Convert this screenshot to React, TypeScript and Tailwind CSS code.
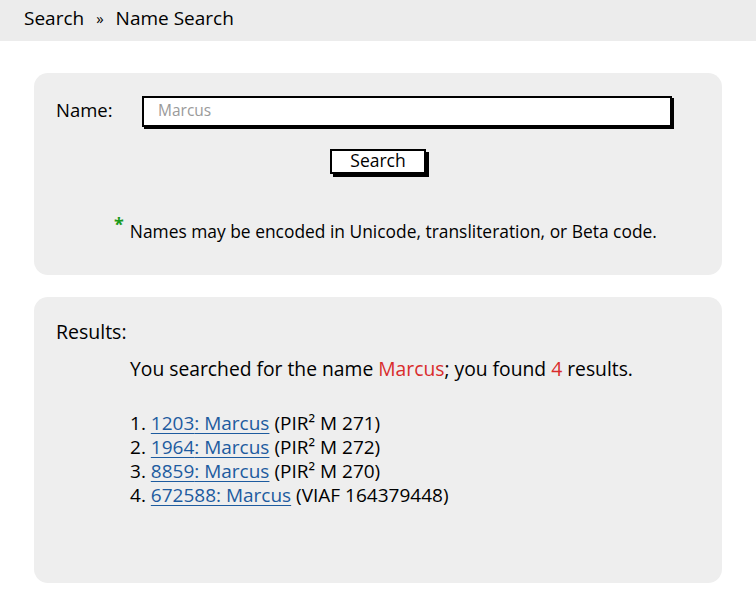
export default function App() {
  const results = [
    { id: "1203", ref: "PIR² M 271" },
    { id: "1964", ref: "PIR² M 272" },
    { id: "8859", ref: "PIR² M 270" },
    { id: "672588", ref: "VIAF 164379448" },
  ];

  return (
    <div className="w-[756px] h-[612px] bg-white text-black font-['Open_Sans',sans-serif]">
      {/* breadcrumb */}
      <div className="h-[41px] bg-[#ececec] flex items-center pl-[24px] text-[19px] pb-[4px]">
        <span>Search</span>
        <span className="mx-[12px] text-[15px]">»</span>
        <span>Name Search</span>
      </div>

      <div className="pl-[34px] pr-[34px] pt-[32px] flex flex-col gap-[22px]">
        {/* search panel */}
        <div className="h-[202px] bg-[#eeeeee] rounded-[14px] pt-[23px] flex flex-col">
          <div className="flex items-center">
            <label className="w-[108px] pl-[22px] text-[18.5px] pb-[4px]">Name:</label>
            <div className="w-[530px] h-[31px] bg-white border-2 border-black shadow-[2px_2px_0_#000] flex items-center pl-[14px] pb-[2px] text-[15.5px] text-[#9a9a9a]">
              Marcus
            </div>
          </div>
          <div className="flex justify-center mt-[21px]">
            <button className="w-[96px] h-[25px] bg-white border-2 border-black shadow-[3px_3px_0_#000] text-[17.5px] leading-none pb-[2px]">
              Search
            </button>
          </div>
          <div className="mt-[44px] pl-[80px] text-[17.4px] flex items-start">
            <span className="text-[#1a9a1a] font-bold text-[18px] leading-none mr-[6px] -mt-[3px]">*</span>
            <span>Names may be encoded in Unicode, transliteration, or Beta code.</span>
          </div>
        </div>

        {/* results panel */}
        <div className="h-[286px] bg-[#eeeeee] rounded-[14px] pt-[20px] pl-[22px]">
          <div className="text-[19.5px]">Results:</div>
          <div className="pl-[74px] mt-[9px] text-[19.3px]">
            You searched for the name <span className="text-[#d92c2c]">Marcus</span>; you found{" "}
            <span className="text-[#d92c2c]">4</span> results.
          </div>
          <ol className="pl-[74px] mt-[27px] text-[19px] leading-[24px] flex flex-col">
            {results.map((r, i) => (
              <li key={r.id} className="h-[24px]">
                {i + 1}.{" "}
                <a href="#" className="text-[#1d5b9f] underline underline-offset-[3px]">
                  {r.id}: Marcus
                </a>{" "}
                ({r.ref})
              </li>
            ))}
          </ol>
        </div>
      </div>
    </div>
  );
}
